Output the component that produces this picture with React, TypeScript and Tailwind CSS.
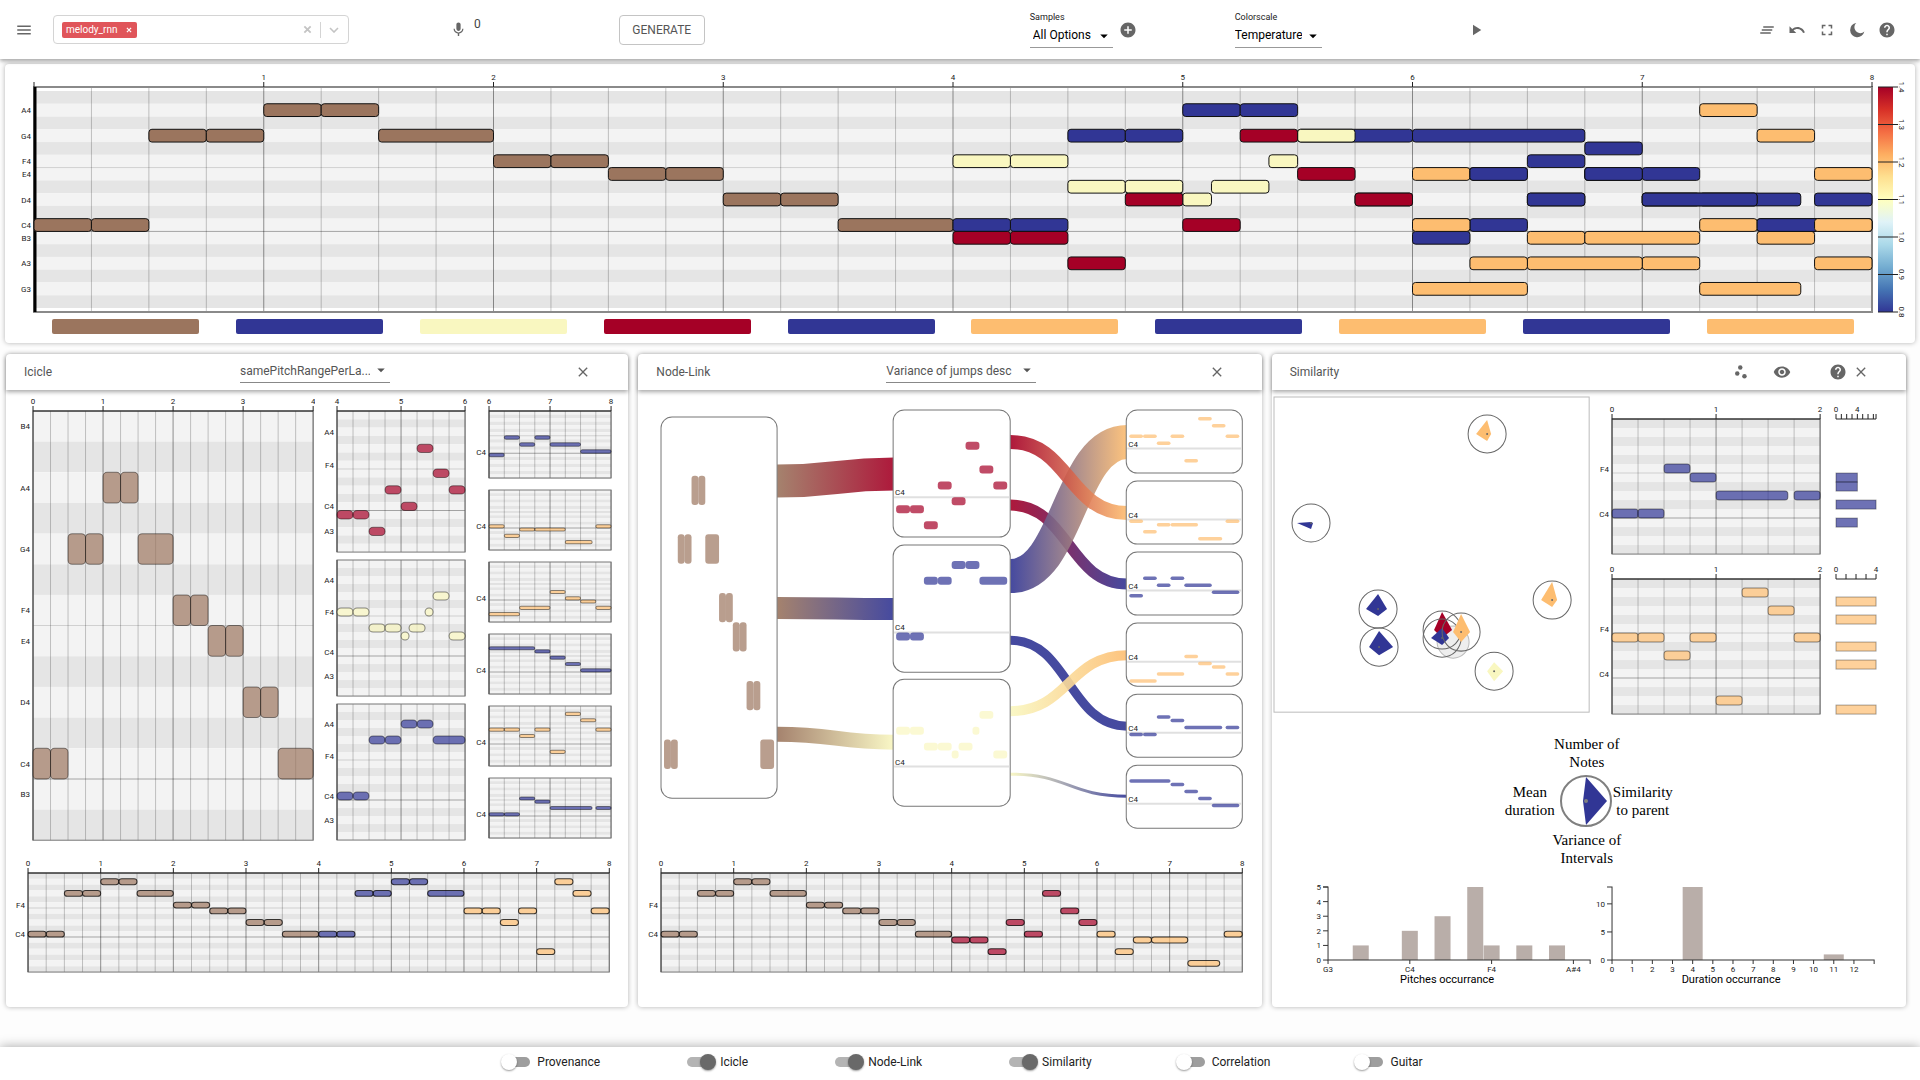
import React, { useState } from "react";
import {
  MdMenu,
  MdMic,
  MdAddCircle,
  MdPlayArrow,
  MdClearAll,
  MdFullscreen,
  MdHelp,
  MdScatterPlot,
  MdVisibility,
  MdClose,
  MdArrowDropDown,
} from "react-icons/md";

const BROWN = "#9b755e";
const BLUE = "#313695";
const YELLOW = "#f9f7c0";
const RED = "#a50026";
const ORANGE = "#fdbd70";

/** start beat, length in beats, MIDI pitch */
type Note = [number, number, number];
type Voice = { color: string; notes: Note[] };

const root: Voice = {
  color: BROWN,
  notes: [
    [0, 0.25, 60], [0.25, 0.25, 60], [0.5, 0.25, 67], [0.75, 0.25, 67],
    [1, 0.25, 69], [1.25, 0.25, 69], [1.5, 0.5, 67], [2, 0.25, 65],
    [2.25, 0.25, 65], [2.5, 0.25, 64], [2.75, 0.25, 64], [3, 0.25, 62],
    [3.25, 0.25, 62], [3.5, 0.5, 60],
  ],
};
const midBlue: Voice = {
  color: BLUE,
  notes: [
    [4, 0.25, 60], [4.25, 0.25, 60], [4.5, 0.25, 67], [4.75, 0.25, 67],
    [5, 0.25, 69], [5.25, 0.25, 69], [5.5, 0.5, 67],
  ],
};
const midYellow: Voice = {
  color: YELLOW,
  notes: [
    [4, 0.25, 65], [4.25, 0.25, 65], [4.5, 0.25, 63], [4.75, 0.25, 63],
    [5, 0.125, 62], [5.125, 0.25, 63], [5.375, 0.125, 65], [5.5, 0.25, 67],
    [5.75, 0.25, 62],
  ],
};
const midRed: Voice = {
  color: RED,
  notes: [
    [4, 0.25, 59], [4.25, 0.25, 59], [4.5, 0.25, 57], [4.75, 0.25, 62],
    [5, 0.25, 60], [5.25, 0.25, 67], [5.5, 0.25, 64], [5.75, 0.25, 62],
  ],
};
const leaf1: Voice = {
  color: BLUE,
  notes: [
    [6, 0.25, 59], [6.25, 0.25, 64], [6.5, 0.25, 62], [6.75, 0.25, 64],
    [7, 0.5, 62], [7.5, 0.5, 60],
  ],
};
const leaf2: Voice = {
  color: ORANGE,
  notes: [
    [6, 0.25, 60], [6.25, 0.25, 57], [6.5, 0.25, 59], [6.75, 0.5, 59],
    [7.25, 0.44, 55], [7.75, 0.25, 60],
  ],
};
const leaf3: Voice = {
  color: ORANGE,
  notes: [
    [6, 0.5, 55], [6.5, 0.5, 57], [7, 0.25, 62], [7.25, 0.25, 60],
    [7.5, 0.25, 59], [7.75, 0.25, 57],
  ],
};
const leaf4: Voice = {
  color: BLUE,
  notes: [
    [6, 0.75, 67], [6.75, 0.25, 66], [7, 0.25, 64], [7.25, 0.25, 62],
    [7.5, 0.5, 60],
  ],
};
const leaf5: Voice = {
  color: ORANGE,
  notes: [
    [6, 0.25, 64], [6.25, 0.25, 64], [6.5, 0.25, 62], [6.75, 0.25, 64],
    [7, 0.25, 57], [7.25, 0.25, 69], [7.5, 0.25, 67], [7.75, 0.25, 64],
  ],
};
const leaf6: Voice = {
  color: BLUE,
  notes: [
    [6, 0.25, 60], [6.25, 0.25, 60], [6.5, 0.25, 65], [6.75, 0.25, 64],
    [7, 0.69, 62], [7.75, 0.25, 62],
  ],
};

const PITCH: Record<string, number> = {
  B4: 71, A4: 69, G4: 67, F4: 65, E4: 64, D4: 62, C4: 60, B3: 59, A3: 57, G3: 55,
};
const isBlackKey = (p: number) => [1, 3, 6, 8, 10].includes(p % 12);

type GridProps = {
  x: number; y: number; w: number; h: number;
  top: number; rows: number; start: number; beats: number;
  labels: string[]; voices: Voice[];
  axis?: boolean; hideZero?: boolean; main?: boolean;
  stroke?: string; radius?: number; pad?: number; offset?: number;
};

function RollGrid(p: GridProps) {
  const pad = p.pad ?? 0;
  const rh = (p.h - 2 * pad) / p.rows;
  const bw = p.w / p.beats;
  const rowY = (pitch: number) => p.y + pad + (p.top - pitch) * rh;
  const offset = p.offset ?? 0;
  const pitches = Array.from({ length: p.rows }, (_, i) => p.top - i);
  const quarters = Array.from({ length: p.beats * 4 + 1 }, (_, i) => i);
  const shown = quarters.filter((q) => q % 4 === 0);
  return (
    <g>
      {pitches.map((n) => (
        <rect key={n} x={p.x} y={rowY(n)} width={p.w} height={rh} fill={isBlackKey(n) ? "#e5e5e5" : "#f3f3f3"} />
      ))}
      {pitches.filter((n) => n % 12 === 0 || n % 12 === 5).map((n) => (
        <line key={n} x1={p.x} x2={p.x + p.w} y1={rowY(n) + rh} y2={rowY(n) + rh}
          stroke={n % 12 === 0 ? "#a3a3a3" : "#d0d0d0"} strokeWidth={1} />
      ))}
      {quarters.map((q) => (
        <line key={q} x1={p.x + (q * bw) / 4} x2={p.x + (q * bw) / 4} y1={p.y} y2={p.y + p.h}
          stroke="#000" strokeOpacity={q % 4 === 0 ? 0.42 : 0.22} strokeWidth={1} />
      ))}
      <rect x={p.x} y={p.y} width={p.w} height={p.h} fill="none" stroke={p.main ? "#8a8a8a" : "#777"} strokeWidth={p.main ? 2 : 1} />
      <line x1={p.x + (p.main ? 1 : 0)} x2={p.x + (p.main ? 1 : 0)} y1={p.y} y2={p.y + p.h}
        stroke={p.main ? "#000" : "#555"} strokeWidth={p.main ? 3 : 1} />
      {p.voices.map((v, vi) =>
        v.notes.map(([s, d, n], i) => (
          <rect key={vi + "-" + i} x={p.x + (s - p.start - offset) * bw} y={rowY(n)} width={d * bw} height={rh}
            rx={Math.min(p.radius ?? 3, rh / 2)} fill={v.color} fillOpacity={p.main ? 1 : 0.7}
            stroke={p.stroke ?? "rgba(0,0,0,0.45)"} strokeWidth={1} />
        ))
      )}
      {p.axis && (
        <g>
          {!p.main && <line x1={p.x} x2={p.x + p.w} y1={p.y} y2={p.y} stroke="#111" />}
          {shown.map((q) => (
            <g key={q}>
              <line x1={p.x + (q * bw) / 4} x2={p.x + (q * bw) / 4} y1={p.y - 5} y2={p.y} stroke="#222" />
              {!(p.hideZero && q === 0) && (
                <text x={p.x + (q * bw) / 4} y={p.y - 7} textAnchor="middle">{p.start + q / 4}</text>
              )}
            </g>
          ))}
        </g>
      )}
      {p.labels.map((l) => (
        <text key={l} x={p.x - 3} y={rowY(PITCH[l]) + rh / 2 + 3} textAnchor="end">{l}</text>
      ))}
    </g>
  );
}

function Chart({ view, label, children }: { view: string; label: string; children: React.ReactNode }) {
  return (
    <svg viewBox={view} role="img" aria-label={label} className="block h-auto w-full fill-[#222] text-[8px]">
      {children}
    </svg>
  );
}

function Dropdown({ label, value, box, text }: { label: string; value: string; box: string; text: string }) {
  return (
    <span className={"relative block border-b " + box}>
      <select aria-label={label} className={"block w-full appearance-none bg-transparent pr-5 text-xs outline-none " + text}>
        <option>{value}</option>
      </select>
      <MdArrowDropDown className="pointer-events-none absolute right-0 top-0 size-[18px]" />
    </span>
  );
}

function IconButton({ label, children }: { label: string; children: React.ReactNode }) {
  return (
    <button type="button" aria-label={label} className="flex items-center justify-center text-[#666]">
      {children}
    </button>
  );
}

function Cross({ size }: { size: string }) {
  return (
    <svg viewBox="0 0 10 10" className={"fill-none stroke-current stroke-2 " + size}>
      <path d="M1.500 1.500l7 7M8.500 1.500l-7 7" />
    </svg>
  );
}

function Header() {
  return (
    <header className="relative z-10 flex h-[59px] items-center bg-white pl-[15px] pr-6 shadow-[0_2px_4px_rgba(0,0,0,0.35)]">
      <IconButton label="Menu"><MdMenu className="size-[18px]" /></IconButton>
      <div className="ml-5 flex h-[29px] w-[296px] items-center rounded border border-[#d4d4d4] px-2">
        <span className="flex h-4 items-center gap-2 rounded-xs bg-[#e0555a] pl-1 pr-[5px] text-[10px] text-white">
          melody_rnn
          <button type="button" aria-label="Remove melody_rnn"><Cross size="size-[6px]" /></button>
        </span>
        <input aria-label="Models" className="h-5 min-w-0 flex-1 bg-transparent text-xs outline-none" />
        <button type="button" aria-label="Clear" className="text-[#c4c4c4]"><Cross size="size-[9px]" /></button>
        <span className="mx-2 h-4 w-px bg-[#d4d4d4]" />
        <button type="button" aria-label="Open models" className="mr-px text-[#c4c4c4]">
          <svg viewBox="0 0 10 6" className="h-[6px] w-[10px] fill-none stroke-current stroke-[1.6]"><path d="M1 1l4 4 4-4" /></svg>
        </button>
      </div>
      <div className="ml-[101px] flex items-center gap-[7px]">
        <IconButton label="Record"><MdMic className="size-[17px]" /></IconButton>
        <span className="pb-[11px] text-xs leading-4 text-[#444]">0</span>
      </div>
      <button type="button" className="ml-[138px] h-[30px] w-[86px] rounded border border-[#c4c4c4] text-xs text-[#555]">
        GENERATE
      </button>
      <div className="ml-[325px] flex items-center gap-[6px]">
        <div className="pb-px">
          <span className="block text-[9px] leading-3 text-[#222]">Samples</span>
          <Dropdown label="Samples" value="All Options" box="mt-1 h-[21px] w-[83px] border-[#999]" text="pl-[3px] leading-4 text-black" />
        </div>
        <IconButton label="Add sample"><MdAddCircle className="size-[18px]" /></IconButton>
      </div>
      <div className="ml-[98px] pb-px">
        <span className="block text-[9px] leading-3 text-[#222]">Colorscale</span>
        <Dropdown label="Colorscale" value="Temperature" box="mt-1 h-[21px] w-[87px] border-[#999]" text="leading-4 text-black" />
      </div>
      <div className="ml-[145px]"><IconButton label="Play"><MdPlayArrow className="size-[18px]" /></IconButton></div>
      <div className="ml-auto flex items-center gap-3">
        <IconButton label="Clear all"><MdClearAll className="size-[18px]" /></IconButton>
        <IconButton label="Undo">
          <svg viewBox="0 0 24 24" className="size-[18px] fill-current">
            <path d="M12.5 8c-2.65 0-5.05.99-6.9 2.6L2 7v9h9l-3.62-3.62c1.39-1.16 3.16-1.88 5.12-1.88 3.54 0 6.55 2.31 7.6 5.5l2.37-.78C21.08 11.03 17.15 8 12.5 8z" />
          </svg>
        </IconButton>
        <IconButton label="Fullscreen"><MdFullscreen className="size-[18px]" /></IconButton>
        <IconButton label="Dark mode">
          <svg viewBox="0 0 24 24" className="size-[18px] fill-current">
            <path d="M11 2.5a9.6 9.6 0 1 0 10.8 11.6 7.4 7.4 0 0 1-10.800-11.600z" />
          </svg>
        </IconButton>
        <IconButton label="Help"><MdHelp className="size-[18px]" /></IconButton>
      </div>
    </header>
  );
}

const TEMPERATURE = [
  "#a50026", "#d73027", "#f46d43", "#fdae61", "#fee090", "#ffffbf",
  "#e0f3f8", "#abd9e9", "#74add1", "#4575b4", "#313695",
];
const SWATCHES = [
  "bg-[#9b755e]", "bg-[#313695]", "bg-[#f9f7c0]", "bg-[#a50026]", "bg-[#313695]",
  "bg-[#fdbd70]", "bg-[#313695]", "bg-[#fdbd70]", "bg-[#313695]", "bg-[#fdbd70]",
];

function Overview() {
  return (
    <section className="mx-[5px] mt-[5px] rounded bg-white pb-[9px] shadow-[0_0_5px_rgba(0,0,0,0.3)]">
      <Chart view="5 64 1910 254" label="Piano roll of all samples">
        <defs>
          <linearGradient id="temperature" x1="0" y1="0" x2="0" y2="1">
            {TEMPERATURE.map((c, i) => <stop key={c} offset={i / 10} stopColor={c} />)}
          </linearGradient>
        </defs>
        <RollGrid main axis hideZero x={34} y={87} w={1838} h={225} pad={4} top={70} rows={17} start={0} beats={8}
          stroke="#111" radius={3}
          labels={["A4", "G4", "F4", "E4", "D4", "C4", "B3", "A3", "G3"]}
          voices={[root, midBlue, midYellow, midRed, leaf5, leaf6, leaf4, leaf3, leaf1, leaf2]} />
        <rect x={1878} y={87} width={15} height={225} fill="url(#temperature)" />
        {["1.4", "1.3", "1.2", "1.1", "1.0", "0.9", "0.8"].map((t, i) => (
          <g key={t}>
            <line x1={1878} x2={1898} y1={87 + i * 37.5} y2={87 + i * 37.5} stroke="#222" />
            <text transform={`translate(1899 ${87 + i * 37.5}) rotate(90)`} textAnchor="middle">{t}</text>
          </g>
        ))}
      </Chart>
      <div className="grid grid-cols-10 pl-[29px] pr-[43px] pt-px">
        {SWATCHES.map((c, i) => (
          <button key={i} type="button" aria-label={"Sample " + (i + 1)} className={"mx-auto block h-[15px] w-4/5 rounded-xs " + c} />
        ))}
      </div>
    </section>
  );
}

function Panel({ title, titleWidth, controls, children }: {
  title: string; titleWidth: string; controls: React.ReactNode; children: React.ReactNode;
}) {
  return (
    <section className="flex flex-col rounded bg-white shadow-[0_0_5px_rgba(0,0,0,0.3)]">
      <div className="relative flex h-9 items-center rounded-t pl-[18px] pr-[37px] text-[#555] shadow-[0_2px_4px_rgba(0,0,0,0.35)]">
        <h2 className={"text-xs " + titleWidth}>{title}</h2>
        {controls}
      </div>
      {children}
    </section>
  );
}

function SelectControls({ label, value }: { label: string; value: string }) {
  return (
    <>
      <Dropdown label={label} value={value} box="h-[22px] w-[150px] border-[#888]" text="leading-5" />
      <div className="ml-auto">
        <IconButton label="Close"><MdClose className="size-4" /></IconButton>
      </div>
    </>
  );
}

function Strip({ voices, label, view }: { voices: Voice[]; label: string; view: string }) {
  return (
    <Chart view={view} label={label}>
      <RollGrid axis x={22} y={873} w={581} h={99} top={70} rows={17} start={0} beats={8} radius={3}
        stroke="rgba(0,0,0,0.75)" labels={["F4", "C4"]} voices={voices} />
    </Chart>
  );
}

function Icicle() {
  const mids = [midRed, midYellow, midBlue];
  const leaves = [leaf1, leaf2, leaf3, leaf4, leaf5, leaf6];
  return (
    <Panel title="Icicle" titleWidth="w-[216px]" controls={<SelectControls label="Icicle layout" value="samePitchRangePerLa..." />}>
      <div className="grid grid-cols-[309fr_153fr_160fr] items-start">
        <Chart view="6 390 309 451" label="First sample">
          <RollGrid axis x={33} y={411} w={280} h={429} top={71} rows={14} start={0} beats={4} radius={4}
            labels={["B4", "A4", "G4", "F4", "E4", "D4", "C4", "B3"]} voices={[root]} />
        </Chart>
        <div className="flex flex-col">
          {mids.map((v, i) => (
            <Chart key={i} view={i ? "315 0 153 144" : "315 0 153 163"} label={"Continuation " + (i + 1)}>
              <RollGrid axis={i === 0} x={337} y={i ? 7 : 21} w={128} h={i ? 136 : 141} top={71} rows={17} start={4} beats={2}
                radius={4} labels={["A4", "F4", "C4", "A3"]} voices={[v]} />
            </Chart>
          ))}
        </div>
        <div className="flex flex-col">
          {leaves.map((v, i) => (
            <Chart key={i} view={i ? "468 0 160 72" : "468 0 160 89"} label={"Leaf " + (i + 1)}>
              <RollGrid axis={i === 0} x={489} y={i ? 11 : 21} w={122} h={i ? 60 : 67} top={71} rows={19} start={6} beats={2}
                radius={2} labels={["C4"]} voices={[v]} />
            </Chart>
          ))}
        </div>
      </div>
      <Strip view="0 841 622 140" voices={[root, midBlue, leaf5]} label="Selected path of the icicle view" />
    </Panel>
  );
}

type NodeProps = {
  x: number; y: number; w: number; h: number; rows: number; start: number; beats: number; voice: Voice; base?: boolean;
};

function TreeNode({ x, y, w, h, rows, start, beats, voice, base }: NodeProps) {
  const rh = h / rows;
  const bw = (w - 6) / beats;
  const lineY = y + 11 * rh;
  return (
    <g>
      <rect x={x} y={y} width={w} height={h} rx={11} fill="#fff" stroke="#777" />
      {base && <line x1={x + 1} x2={x + w - 1} y1={lineY} y2={lineY} stroke="#e0e0e0" strokeWidth={2} />}
      {base && <text x={x + 2} y={lineY - 2}>C4</text>}
      {voice.notes.map(([s, d, n], i) => (
        <rect key={i} x={x + 3 + (s - start) * bw} y={y + (71 - n) * rh} width={d * bw} height={rh}
          rx={Math.min(3, rh / 2)} fill={voice.color} fillOpacity={0.7} />
      ))}
    </g>
  );
}

/** source x/y, target x/y, ribbon width, source colour, target colour */
const LINKS: [number, number, number, number, number, string, string][] = [
  [777, 481, 894, 474, 33, BROWN, RED],
  [777, 608, 894, 609, 22, BROWN, BLUE],
  [777, 734, 894, 742, 15, BROWN, YELLOW],
  [1010, 505, 1127, 584, 11, RED, BLUE],
  [1010, 640, 1127, 726, 9, BLUE, BLUE],
  [1010, 576, 1127, 442, 34, BLUE, ORANGE],
  [1010, 442, 1127, 513, 14, RED, ORANGE],
  [1010, 711, 1127, 655, 10, YELLOW, ORANGE],
  [1010, 774, 1127, 796, 3, YELLOW, BLUE],
];

function NodeLink() {
  const leaves = [leaf5, leaf2, leaf1, leaf3, leaf6, leaf4];
  return (
    <Panel title="Node-Link" titleWidth="w-[230px]" controls={<SelectControls label="Node order" value="Variance of jumps desc" />}>
      <Chart view="638 390 623 452" label="Tree of continuations">
        <defs>
          {LINKS.map(([x1, , x2, , , a, b], i) => (
            <linearGradient key={i} id={"link" + i} gradientUnits="userSpaceOnUse" x1={x1} x2={x2} y1={0} y2={0}>
              <stop offset={0} stopColor={a} />
              <stop offset={1} stopColor={b} />
            </linearGradient>
          ))}
        </defs>
        {LINKS.map(([x1, y1, x2, y2, w], i) => {
          const m = (x1 + x2) / 2;
          return (
            <path key={i} d={`M${x1} ${y1}C${m} ${y1} ${m} ${y2} ${x2} ${y2}`} fill="none"
              stroke={`url(#link${i})`} strokeWidth={w} strokeOpacity={0.9} />
          );
        })}
        <TreeNode x={661} y={417} w={116} h={381} rows={13} start={0} beats={4} voice={root} />
        {[midRed, midBlue, midYellow].map((v, i) => (
          <TreeNode key={i} base x={893} y={[410, 545, 679][i]} w={117} h={127} rows={16} start={4} beats={2} voice={v} />
        ))}
        {leaves.map((v, i) => (
          <TreeNode key={i} base x={1126} y={410 + i * 71} w={116} h={63} rows={18} start={6} beats={2} voice={v} />
        ))}
      </Chart>
      <Strip view="-1 842 623 140" voices={[root, midRed, leaf2]} label="Selected path of the node-link view" />
    </Panel>
  );
}

/** centre x/y, then the glyph's reach up, right, down and left */
const GLYPHS: [number, number, number, number, number, number, string][] = [
  [1487, 434, 14, 4, 7, 11, ORANGE],
  [1311, 523, 1, 2, 6, 14, BLUE],
  [1378, 609, 15, 9, 7, 12, BLUE],
  [1379, 647, 16, 14, 8, 10, BLUE],
  [1442, 630, 18, 10, 8, 8, RED],
  [1442, 638, 10, 7, 7, 11, BLUE],
  [1461, 632, 18, 9, 10, 8, ORANGE],
  [1552, 600, 18, 5, 7, 11, ORANGE],
  [1494, 671, 9, 9, 10, 7, YELLOW],
];

function Bars({ y, ticks, max, bars, color, view }: {
  y: number; ticks: number[]; max: number; bars: [number, number][]; color: string; view: string;
}) {
  const sx = (v: number) => 1836 + (v / max) * 40;
  return (
    <Chart view={view} label="Total duration by pitch">
      <line x1={1836} x2={1876} y1={y} y2={y} stroke="#222" />
      {ticks.map((t) => <line key={t} x1={sx(t)} x2={sx(t)} y1={y - 5} y2={y} stroke="#222" />)}
      <text x={1836} y={y - 7} textAnchor="middle">0</text>
      <text x={sx(4)} y={y - 7} textAnchor="middle">4</text>
      {bars.map(([row, v], i) => (
        <rect key={i} x={1836} y={y + row * 9} width={sx(v) - 1836} height={9} fill={color} fillOpacity={0.7} stroke="rgba(0,0,0,0.35)" />
      ))}
    </Chart>
  );
}

function Histogram({ view, x, title, titleX, step, max, yTicks, xTicks, bars, barWidth, label }: {
  view: string; x: number; title: string; titleX: number; step: number; max: number; yTicks: number[];
  xTicks: [number, string][]; bars: [number, number][]; barWidth: number; label: string;
}) {
  const sy = (v: number) => 961 - (v / max) * 73;
  return (
    <Chart view={view} label={label}>
      {bars.map(([b, v]) => (
        <rect key={b} x={x + b * step - barWidth / 2} y={sy(v)} width={barWidth} height={961 - sy(v)} fill="#b9aea9" />
      ))}
      <path d={`M${x - 5} ${sy(max)}H${x}V961H${x + 262}v4`} fill="none" stroke="#333" />
      {yTicks.map((t) => (
        <g key={t}>
          <line x1={x - 5} x2={x} y1={sy(t)} y2={sy(t)} stroke="#333" />
          <text x={x - 7} y={sy(t) + 3} textAnchor="end">{t}</text>
        </g>
      ))}
      {xTicks.map(([t, name]) => (
        <g key={t}>
          <line x1={x + t * step} x2={x + t * step} y1={961} y2={965} stroke="#333" />
          <text x={x + t * step} y={973} textAnchor="middle">{name}</text>
        </g>
      ))}
      <text x={titleX} y={984} textAnchor="middle" className="fill-black text-[11px]">{title}</text>
    </Chart>
  );
}

function Similarity() {
  return (
    <Panel
      title="Similarity"
      titleWidth="flex-1"
      controls={
        <div className="flex items-center">
          <IconButton label="Scatter plot"><MdScatterPlot className="size-[18px]" /></IconButton>
          <span className="ml-[23px] mr-[38px] flex"><IconButton label="Visibility"><MdVisibility className="size-[18px]" /></IconButton></span>
          <IconButton label="Help"><MdHelp className="size-[18px]" /></IconButton>
          <span className="ml-[6px] flex"><IconButton label="Close"><MdClose className="size-4" /></IconButton></span>
        </div>
      }
    >
      <div className="grid grid-cols-[320fr_314fr] items-start">
        <Chart view="1272 390 320 326" label="Similarity scatter plot">
          <rect x={1274} y={397} width={315} height={315} fill="none" stroke="#bbb" />
          <circle cx={1453} cy={642} r={16} fill="#eee" stroke="#bbb" />
          {GLYPHS.map(([x, y, u, r, d, l, c], i) => (
            <g key={i}>
              <circle cx={x} cy={y} r={19} fill="none" stroke="#666" />
              <path d={`M${x} ${y - u}L${x + r} ${y}L${x} ${y + d}L${x - l} ${y}z`} fill={c} />
              <circle cx={x} cy={y} r={1} fill="#666" />
            </g>
          ))}
        </Chart>
        <div className="grid grid-cols-[234fr_80fr]">
          <Chart view="1592 390 234 168" label="Compared sample 1">
            <RollGrid axis x={1612} y={419} w={208} h={135} top={70} rows={15} start={0} offset={6} beats={2} radius={3}
              labels={["F4", "C4"]} voices={[leaf6]} />
          </Chart>
          <Bars view="1826 390 80 168" y={419} ticks={[0, 1, 2, 3, 4, 5, 6, 7, 7.5]} max={7.5} color={BLUE}
            bars={[[6, 4], [7, 4], [9, 7.5], [11, 4]]} />
          <Chart view="1592 558 234 162" label="Compared sample 2">
            <RollGrid axis x={1612} y={579} w={208} h={135} top={70} rows={15} start={0} offset={6} beats={2} radius={3}
              labels={["F4", "C4"]} voices={[leaf5]} />
          </Chart>
          <Bars view="1826 558 80 162" y={579} ticks={[0, 1, 2, 3, 4]} max={4} color={ORANGE}
            bars={[[2, 4], [4, 4], [7, 4], [9, 4], [14, 4]]} />
        </div>
      </div>
      <div className="flex flex-col items-center pr-1 pt-[15px] text-center font-['Liberation_Serif',serif] text-[15px] leading-[18px] text-black">
        <p>Number of<br />Notes</p>
        <div className="my-[3px] flex items-center pl-1">
          <p>Mean<br />duration</p>
          <svg viewBox="0 0 54 54" role="img" aria-label="Glyph legend" className="ml-1 size-[54px]">
            <circle cx={27} cy={27} r={25} fill="none" stroke="#808080" strokeWidth={2} />
            <path d="M27 3L48 27L27 51L24 27z" fill="#313695" />
            <circle cx={27} cy={27} r={2} fill="#808080" />
          </svg>
          <p>Similarity<br />to parent</p>
        </div>
        <p>Variance of<br />Intervals</p>
      </div>
      <div className="grid grid-cols-[320fr_314fr] pt-2">
        <Histogram view="1272 876 320 114" label="Histogram of pitches" x={1328} title="Pitches occurrance" titleX={1447}
          step={16.35} max={5} yTicks={[0, 1, 2, 3, 4, 5]} barWidth={16}
          xTicks={[[0, "G3"], [5, "C4"], [10, "F4"], [15, "A#4"]]}
          bars={[[2, 1], [5, 2], [7, 3], [9, 5], [10, 1], [12, 1], [14, 1]]} />
        <Histogram view="1592 876 314 114" label="Histogram of durations" x={1612} title="Duration occurrance" titleX={1731}
          step={20.15} max={13} yTicks={[0, 5, 10]} barWidth={20}
          xTicks={Array.from({ length: 13 }, (_, i) => [i, String(i)] as [number, string])}
          bars={[[4, 13], [11, 1]]} />
      </div>
    </Panel>
  );
}

function Switch({ label, initial }: { label: string; initial: boolean }) {
  const [on, setOn] = useState(initial);
  return (
    <label className="flex cursor-pointer items-center text-xs text-[#222]">
      <span className="relative flex h-6 w-10 items-center px-[7px]">
        <input type="checkbox" role="switch" checked={on} onChange={() => setOn(!on)} className="peer sr-only" />
        <span className="h-[10px] w-full rounded-full bg-[#9e9e9e] peer-checked:bg-[#b4b4b4]" />
        <span className="absolute left-1 size-4 rounded-full bg-white shadow-[0_1px_2px_rgba(0,0,0,0.4)] peer-checked:left-5 peer-checked:bg-[#696969]" />
      </span>
      {label}
    </label>
  );
}

export default function App() {
  return (
    <div className="flex min-h-screen flex-col bg-[#fdfdfd] font-[Roboto,sans-serif]">
      <Header />
      <main className="flex flex-1 flex-col pb-[40px]">
        <Overview />
        <div className="grid flex-1 grid-cols-[622fr_623fr_634fr] gap-[10px] pl-[6px] pr-[14px] pt-[11px]">
          <Icicle />
          <NodeLink />
          <Similarity />
        </div>
      </main>
      <footer className="flex h-[33px] items-center justify-center gap-20 bg-white pb-[3px] shadow-[0_0_12px_rgba(0,0,0,0.35)]">
        <Switch label="Provenance" initial={false} />
        <Switch label="Icicle" initial={true} />
        <Switch label="Node-Link" initial={true} />
        <Switch label="Similarity" initial={true} />
        <Switch label="Correlation" initial={false} />
        <Switch label="Guitar" initial={false} />
      </footer>
    </div>
  );
}
